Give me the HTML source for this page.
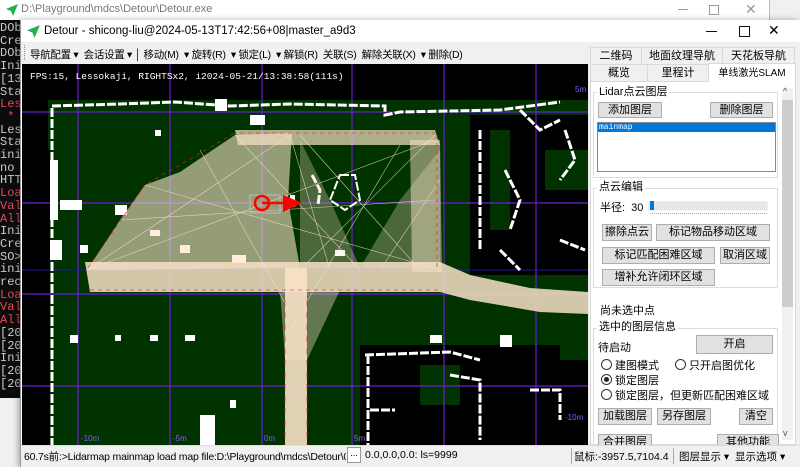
<!DOCTYPE html>
<html><head><meta charset="utf-8">
<style>
*{margin:0;padding:0;box-sizing:border-box}
body{width:800px;height:467px;overflow:hidden;background:#f0f0f0;font-family:"Liberation Sans","Noto Sans CJK SC",sans-serif;font-size:11px;color:#000;position:relative}
.abs{position:absolute}
.con{left:0;top:20px;width:21px;height:378px;background:#0c0c0c;overflow:hidden;font-family:"Liberation Mono","Noto Sans CJK SC",monospace;font-size:12px;line-height:12.7px;color:#ccc;white-space:pre;padding-top:2px}
.con .r{color:#e74856}
.btn{position:absolute;background:#e1e1e1;border:1px solid #adadad;text-align:center;font-size:11px;line-height:15px;white-space:nowrap}
.tab{position:absolute;background:#f0f0f0;border:1px solid #d9d9d9;text-align:center;font-size:11px;line-height:16px;white-space:nowrap}
.grp{position:absolute;border:1px solid #dcdcdc}
.gl{position:absolute;background:#fff;padding:0 2px;font-size:11px;line-height:12px}
.rad{position:absolute;font-size:11px;line-height:13px;white-space:nowrap}
.rad i{display:inline-block;width:11px;height:11px;border:1px solid #333;border-radius:50%;vertical-align:-1px;margin-right:3px;position:relative;background:#fff}
.rad i.on::after{content:"";position:absolute;left:2px;top:2px;width:5px;height:5px;border-radius:50%;background:#222}
</style></head><body>
<div class="abs" style="left:0;top:0;width:770px;height:20px;background:#fff;border-right:1px solid #bbb"></div>
<svg class="abs" style="left:5px;top:3px" width="14" height="14" viewBox="0 0 14 14"><path d="M13 1 L1 6 L6 8 L8 13 Z" fill="#22b14c"/></svg>
<div class="abs" style="left:21px;top:3px;color:#777;font-size:11px">D:\Playground\mdcs\Detour\Detour.exe</div>
<div class="abs" style="left:678px;top:9px;width:10px;height:1px;background:#999"></div>
<div class="abs" style="left:709px;top:5px;width:10px;height:10px;border:1px solid #999"></div>
<div class="abs" style="left:745px;top:1px;color:#999;font-size:14px">✕</div>
<div class="con abs">DOb
Cre
DOb
Ini
[13
Sta
<span class="r">Les</span>
<span class="r"> *</span>
Les
Sta
ini
no
HTT
<span class="r">Loa</span>
<span class="r">Val</span>
<span class="r">All</span>
Ini
Cre
SO>
ini
rec
<span class="r">Loa</span>
<span class="r">Val</span>
<span class="r">All</span>
[20
[20
Ini
[20
[20</div>
<div class="abs" style="left:20px;top:20px;width:780px;height:447px;background:#fff;border-left:1px solid #999;box-shadow:-2px 0 6px rgba(0,0,0,.3)"></div>
<svg class="abs" style="left:26px;top:24px" width="15" height="15" viewBox="0 0 14 14"><path d="M13 1 L1 6 L6 8 L8 13 Z" fill="#22b14c"/></svg>
<div class="abs" style="left:44px;top:25px;font-size:11.5px">Detour - shicong-liu@2024-05-13T17:42:56+08|master_a9d3</div>
<div class="abs" style="left:706px;top:31px;width:11px;height:1px;background:#111"></div>
<div class="abs" style="left:739px;top:26px;width:11px;height:11px;border:1px solid #111"></div>
<div class="abs" style="left:768px;top:22px;font-size:14px">✕</div>
<div class="abs" style="left:21px;top:42px;width:567px;height:22px;background:#f0f0f0"></div>
<div class="abs" style="left:24px;top:45px;width:1px;height:15px;border-left:1px dotted #888"></div>
<div class="abs" style="left:30px;top:47px;font-size:10.5px;white-space:nowrap;letter-spacing:-0.3px">导航配置 ▾ &nbsp;会话设置 ▾ │ 移动(M) &nbsp;▾ 旋转(R) &nbsp;▾ 锁定(L) &nbsp;▾ 解锁(R) &nbsp;关联(S) &nbsp;解除关联(X) &nbsp;▾ 删除(D)</div>
<svg class="abs" style="left:22px;top:64px" width="566" height="381" viewBox="22 64 566 381">
<rect x="22" y="64" width="566" height="381" fill="#000"/>
<rect x="48" y="100" width="540" height="345" fill="#003300"/>
<rect x="22" y="150" width="28" height="295" fill="#000"/>
<rect x="470" y="115" width="118" height="160" fill="#000"/>
<rect x="490" y="130" width="20" height="100" fill="#003300"/>
<rect x="545" y="150" width="43" height="40" fill="#003300"/>
<rect x="360" y="345" width="200" height="100" fill="#000"/>
<rect x="420" y="365" width="40" height="40" fill="#003300"/>
<rect x="540" y="360" width="48" height="85" fill="#000"/>
<g stroke="#6a1fd0" stroke-width="1.2">
<line x1="78" y1="64" x2="78" y2="445"/><line x1="170" y1="64" x2="170" y2="445"/><line x1="262" y1="64" x2="262" y2="445"/><line x1="352" y1="64" x2="352" y2="445"/><line x1="444" y1="64" x2="444" y2="445"/><line x1="536" y1="64" x2="536" y2="445"/>
<line x1="22" y1="112" x2="588" y2="112"/><line x1="22" y1="203" x2="588" y2="203"/><line x1="22" y1="294" x2="588" y2="294"/><line x1="22" y1="386" x2="588" y2="386"/>
</g>
<line x1="22" y1="270" x2="588" y2="270" stroke="#1a1aa0"/>
<g stroke="#fff" stroke-width="3" fill="none" stroke-dasharray="9 2">
<path d="M52 108 L52 445"/><path d="M52 106 L120 104 L175 102 L230 106 L290 104 L385 106 L385 115 L400 112 L500 110 L560 102"/>
<path d="M480 130 L480 250 M500 250 L520 270 M560 240 L585 250"/>
<path d="M365 355 L450 352 L480 360 M368 355 L368 445 M370 410 L395 410 M450 375 L480 380 L480 440 M530 390 L560 390 L560 420"/>
<path d="M340 175 L355 175 L360 200 L345 210 L330 200 Z" stroke-width="2"/>
<path d="M312 175 L320 190 L318 205"/>
<path d="M520 110 L540 130 L560 120 M505 170 L520 200 L510 230 M565 130 L575 160 L560 180"/>
</g>
<g fill="#fff">
<rect x="215" y="99" width="12" height="12"/><rect x="155" y="130" width="6" height="6"/><rect x="115" y="205" width="12" height="10"/><rect x="150" y="230" width="10" height="6"/><rect x="80" y="245" width="8" height="8"/><rect x="60" y="200" width="22" height="10"/><rect x="290" y="195" width="5" height="12"/><rect x="232" y="255" width="14" height="8"/><rect x="180" y="245" width="10" height="8"/><rect x="335" y="250" width="10" height="6"/><rect x="70" y="335" width="8" height="8"/><rect x="115" y="335" width="6" height="6"/><rect x="150" y="335" width="8" height="6"/><rect x="185" y="335" width="10" height="6"/><rect x="230" y="400" width="6" height="8"/><rect x="200" y="415" width="15" height="30"/><rect x="250" y="115" width="15" height="10"/><rect x="50" y="160" width="8" height="60"/><rect x="50" y="240" width="12" height="20"/><rect x="430" y="335" width="12" height="8"/><rect x="500" y="335" width="12" height="12"/>
</g>
<g fill="#f8e2c8" stroke="none">
<path d="M87 270 L120 220 L145 185 L180 172 L235 135 L292 133 L288 200 L300 268 Z" opacity=".6"/>
<path d="M235 130 L435 130 L440 145 L238 145 Z" opacity=".7"/>
<path d="M410 140 L440 140 L442 272 L412 272 Z" opacity=".5"/>
<path d="M85 262 L440 262 L470 275 L530 288 L588 292 L588 314 L540 312 L470 300 L440 292 L90 292 Z" opacity=".85"/>
<path d="M285 268 L307 268 L307 445 L285 445 Z" opacity=".9"/>
<path d="M300 140 L330 200 L360 268 L300 268 Z" opacity=".3"/>
<path d="M440 150 L400 200 L360 268 L440 268 Z" opacity=".3"/>
<path d="M280 290 L340 290 L307 360 L285 360 Z" opacity=".4"/>
</g>
<g stroke="#f8e2c8" stroke-width=".6" opacity=".8">
<line x1="87" y1="270" x2="290" y2="135"/><line x1="87" y1="270" x2="435" y2="140"/><line x1="145" y1="185" x2="440" y2="270"/><line x1="235" y1="135" x2="360" y2="270"/><line x1="300" y1="135" x2="420" y2="270"/><line x1="435" y1="135" x2="300" y2="270"/><line x1="290" y1="135" x2="330" y2="270"/><line x1="440" y1="180" x2="380" y2="270"/><line x1="120" y1="220" x2="435" y2="200"/><line x1="200" y1="150" x2="300" y2="330"/><line x1="400" y1="145" x2="290" y2="330"/>
</g>
<g stroke="#e22" stroke-width=".8" fill="none" opacity=".8">
<path d="M90 290 L440 290" stroke-dasharray="4 4"/><path d="M240 133 L435 133" stroke-dasharray="4 4"/><path d="M437 135 L437 270" stroke-dasharray="4 4"/><path d="M88 268 L145 185 L235 133" stroke-dasharray="4 4"/><path d="M285 300 L285 445 M307 300 L307 445" stroke-dasharray="6 6"/>
</g>
<rect x="250" y="195" width="30" height="18" fill="none" stroke="#bbb"/>
<circle cx="262" cy="203" r="7" fill="none" stroke="#f00" stroke-width="2.5"/>
<line x1="262" y1="203" x2="285" y2="203" stroke="#f00" stroke-width="2.5"/>
<path d="M283 195 L302 203 L283 212 Z" fill="#f00"/>
<g fill="#7f5fff" font-family="Liberation Sans,sans-serif" font-size="8"><text x="81" y="441">-10m</text><text x="173" y="441">-5m</text><text x="264" y="441">0m</text><text x="354" y="441">5m</text><text x="575" y="92">5m</text><text x="565" y="420">-10m</text></g>
<text x="30" y="79" fill="#fff" font-family="Liberation Mono,monospace" font-size="9.5">FPS:15, Lessokaji, RIGHTSx2, i2024-05-21/13:38:58(111s)</text>
</svg>
<div class="abs" style="left:588px;top:42px;width:212px;height:403px;background:#f0f0f0"></div>
<div class="tab" style="left:590px;top:47px;width:52px;height:18px">二维码</div>
<div class="tab" style="left:641px;top:47px;width:82px;height:18px">地面纹理导航</div>
<div class="tab" style="left:722px;top:47px;width:73px;height:18px">天花板导航</div>
<div class="tab" style="left:590px;top:64px;width:58px;height:18px">概览</div>
<div class="tab" style="left:647px;top:64px;width:62px;height:18px">里程计</div>
<div class="tab" style="left:708px;top:63px;width:88px;height:20px;background:#fff;border-bottom:none;line-height:19px;font-size:10px">单线激光SLAM</div>
<div class="abs" style="left:590px;top:82px;width:206px;height:363px;background:#fff;border:1px solid #d9d9d9;border-top:none"></div>
<div class="abs" style="left:782px;top:88px;width:11px;height:352px;background:#f0f0f0"></div>
<div class="abs" style="left:782px;top:100px;width:11px;height:207px;background:#cdcdcd"></div>
<div class="abs" style="left:783px;top:86px;font-size:9px;color:#555">^</div>
<div class="abs" style="left:783px;top:428px;font-size:9px;color:#555">v</div>
<div class="grp" style="left:593px;top:92px;width:185px;height:86px"></div>
<div class="gl" style="left:597px;top:86px">Lidar点云图层</div>
<div class="btn" style="left:598px;top:102px;width:64px;height:16px">添加图层</div>
<div class="btn" style="left:710px;top:102px;width:63px;height:16px">删除图层</div>
<div class="abs" style="left:597px;top:122px;width:179px;height:50px;border:1px solid #828790;background:#fff"></div>
<div class="abs" style="left:598px;top:123px;width:177px;height:9px;background:#0078d7;color:#fff;font-family:'Liberation Mono',monospace;font-size:8px;line-height:9px;padding-left:1px">mainmap</div>
<div class="grp" style="left:593px;top:188px;width:185px;height:100px"></div>
<div class="gl" style="left:597px;top:181px">点云编辑</div>
<div class="abs" style="left:600px;top:199px;font-size:11px">半径: &nbsp;30</div>
<div class="abs" style="left:648px;top:201px;width:120px;height:10px;background:#e7e7e7;border:1px solid #f0f0f0"></div>
<div class="abs" style="left:650px;top:201px;width:4px;height:9px;background:#0078d7"></div>
<div class="abs" style="left:650px;top:213px;width:117px;height:2px;border-top:1px dotted #aaa"></div>
<div class="btn" style="left:602px;top:224px;width:50px;height:17px">擦除点云</div>
<div class="btn" style="left:656px;top:224px;width:114px;height:17px">标记物品移动区域</div>
<div class="btn" style="left:602px;top:247px;width:113px;height:17px">标记匹配困难区域</div>
<div class="btn" style="left:720px;top:247px;width:50px;height:17px">取消区域</div>
<div class="btn" style="left:602px;top:269px;width:113px;height:17px">增补允许闭环区域</div>
<div class="abs" style="left:600px;top:302px">尚未选中点</div>
<div class="grp" style="left:593px;top:328px;width:185px;height:117px;border-bottom:none"></div>
<div class="gl" style="left:597px;top:321px">选中的图层信息</div>
<div class="abs" style="left:598px;top:339px">待启动</div>
<div class="btn" style="left:696px;top:335px;width:77px;height:19px;line-height:17px">开启</div>
<div class="rad" style="left:601px;top:359px"><i></i>建图模式</div>
<div class="rad" style="left:675px;top:359px"><i></i>只开启图优化</div>
<div class="rad" style="left:601px;top:374px"><i class="on"></i>锁定图层</div>
<div class="rad" style="left:601px;top:389px"><i></i>锁定图层，但更新匹配困难区域</div>
<div class="btn" style="left:598px;top:408px;width:54px;height:17px">加载图层</div>
<div class="btn" style="left:657px;top:408px;width:54px;height:17px">另存图层</div>
<div class="btn" style="left:739px;top:408px;width:34px;height:17px">清空</div>
<div class="abs" style="left:597px;top:431px;width:185px;height:14px;overflow:hidden"><div class="btn" style="left:1px;top:3px;width:54px;height:17px">合并图层</div><div class="btn" style="left:120px;top:3px;width:62px;height:17px">其他功能</div></div>
<div class="abs" style="left:21px;top:445px;width:779px;height:22px;background:#f0f0f0;border-top:1px solid #ddd"></div>
<div class="abs" style="left:24px;top:449px;width:322px;overflow:hidden;font-size:10.5px;white-space:nowrap;letter-spacing:-0.2px">60.7s前:&gt;Lidarmap mainmap load map file:D:\Playground\mdcs\Detour\0508.2dlm</div>
<div class="abs" style="left:347px;top:447px;width:14px;height:16px;border:1px solid #999;background:#fff;font-size:9px;text-align:center">...</div>
<div class="abs" style="left:365px;top:449px;font-size:10.5px">0.0,0.0,0.0: ls=9999</div>
<div class="abs" style="left:571px;top:448px;width:1px;height:16px;background:#aaa"></div>
<div class="abs" style="left:574px;top:449px;font-size:10.5px;white-space:nowrap">鼠标:-3957.5,7104.4</div>
<div class="abs" style="left:673px;top:448px;width:1px;height:16px;background:#aaa"></div>
<div class="abs" style="left:679px;top:449px;font-size:10.5px;white-space:nowrap">图层显示 ▾ &nbsp;显示选项 ▾</div>
</body></html>
